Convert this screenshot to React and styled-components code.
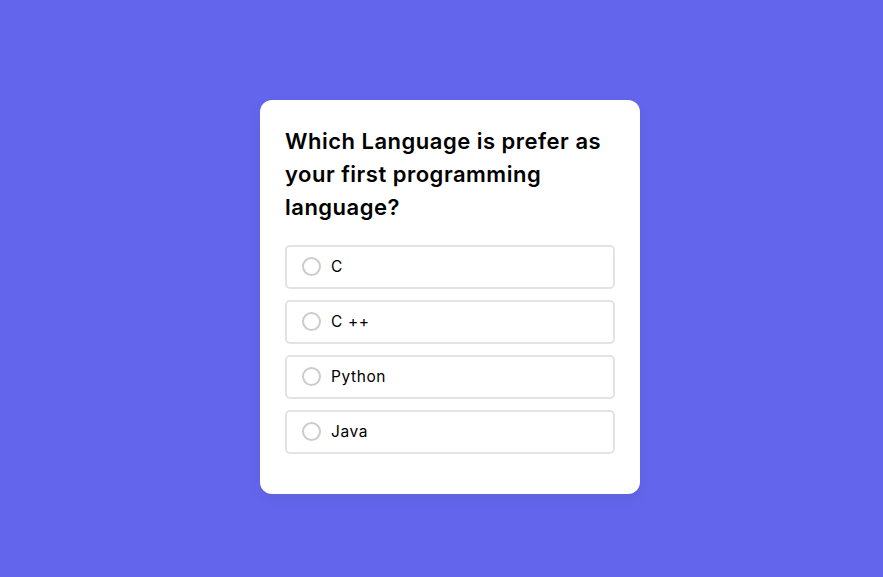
import React from 'react';
import styled, { createGlobalStyle } from 'styled-components';

const GlobalStyle = createGlobalStyle`
    * {
        box-sizing: border-box;
    }

    body {
        margin: 0;
        background-color: #6366ec;
        font-family: "Inter", "Noto Sans", sans-serif;
    }
`;

const Page = styled.main`
    display: flex;
    align-items: center;
    justify-content: center;
    min-height: 100vh;
    padding: 16px 0 0 17px;
`;

const Card = styled.section`
    width: 380px;
    background-color: #ffffff;
    border-radius: 12px;
    padding: 25px 25px 40px;
    box-shadow: 0 4px 12px rgba(0, 0, 0, 0.06);
`;

const Question = styled.h2`
    margin: 0 0 21px;
    font-size: 22px;
    font-weight: 600;
    line-height: 33px;
    letter-spacing: 0.5px;
    color: #000000;
`;

const Options = styled.div`
    display: flex;
    flex-direction: column;
    gap: 11px;
`;

const Option = styled.label`
    display: flex;
    align-items: center;
    gap: 10px;
    height: 44px;
    padding: 0 15px;
    border: 2px solid #e3e3e3;
    border-radius: 5px;
    cursor: pointer;
`;

const Radio = styled.input.attrs({ type: 'radio' })`
    appearance: none;
    margin: 0;
    width: 19px;
    height: 19px;
    border: 2px solid #cccccc;
    border-radius: 50%;
    cursor: pointer;
`;

const OptionText = styled.span`
    font-size: 15.5px;
    letter-spacing: 0.6px;
    color: #000000;
`;

const answers = ['C', 'C ++', 'Python', 'Java'];

export default function App() {
    return (
        <>
            <GlobalStyle />
            <Page>
                <Card>
                    <Question>Which Language is prefer as your first programming language?</Question>

                    <Options>
                        {answers.map((answer) => (
                            <Option key={answer}>
                                <Radio name="language" value={answer} />
                                <OptionText>{answer}</OptionText>
                            </Option>
                        ))}
                    </Options>
                </Card>
            </Page>
        </>
    );
}
